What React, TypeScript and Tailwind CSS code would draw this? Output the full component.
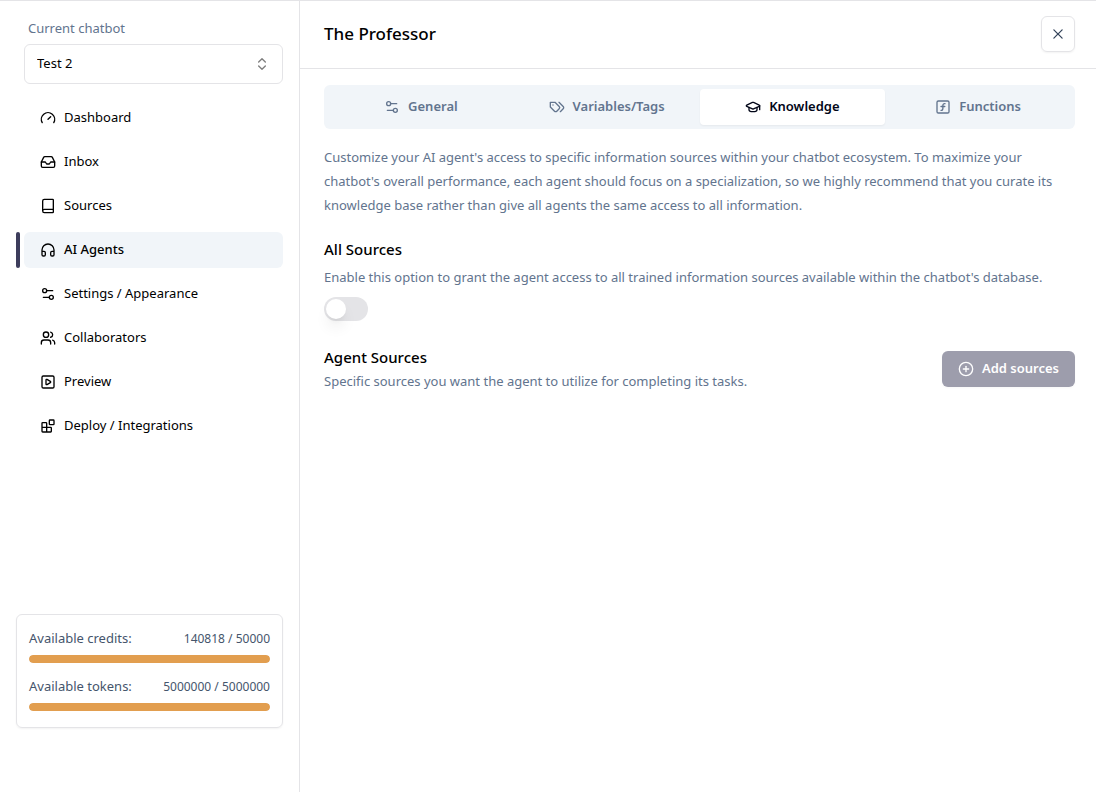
import React, { useState } from "react";
import { Gauge, Inbox, Book, Headphones, Settings2, Users, SquarePlay, GraduationCap, SquareFunction, CirclePlus, ChevronsUpDown } from "lucide-react";

type IconProps = { className?: string; strokeWidth?: number };

function BlocksIcon({ className }: IconProps) {
  return (
    <svg viewBox="0 0 24 24" fill="none" stroke="currentColor" strokeWidth={2} strokeLinecap="round" strokeLinejoin="round" className={className} aria-hidden="true">
      <rect width="7" height="7" x="14" y="3" rx="1" />
      <path d="M10 21V8a1 1 0 0 0-1-1H4a1 1 0 0 0-1 1v12a1 1 0 0 0 1 1h12a1 1 0 0 0 1-1v-5a1 1 0 0 0-1-1H3" />
    </svg>
  );
}

function TagsIcon({ className }: IconProps) {
  return (
    <svg viewBox="0 0 24 24" fill="none" stroke="currentColor" strokeWidth={2} strokeLinecap="round" strokeLinejoin="round" className={className} aria-hidden="true">
      <path d="M9 5H2v7l6.29 6.29c.94.94 2.48.94 3.42 0l3.58-3.58c.94-.94.94-2.48 0-3.42L9 5Z" />
      <path d="M6 9.01V9" />
      <path d="m15 5 6.3 6.3a2.4 2.4 0 0 1 0 3.4L17 19" />
    </svg>
  );
}

function CloseIcon({ className }: IconProps) {
  return (
    <svg viewBox="0 0 15 15" fill="currentColor" className={className} aria-hidden="true">
      <path
        fillRule="evenodd"
        clipRule="evenodd"
        d="M11.7816 4.03157C12.0062 3.80702 12.0062 3.44295 11.7816 3.2184C11.5571 2.99385 11.193 2.99385 10.9685 3.2184L7.50005 6.68682L4.03164 3.2184C3.80708 2.99385 3.44301 2.99385 3.21846 3.2184C2.99391 3.44295 2.99391 3.80702 3.21846 4.03157L6.68688 7.49999L3.21846 10.9684C2.99391 11.193 2.99391 11.557 3.21846 11.7816C3.44301 12.0061 3.80708 12.0061 4.03164 11.7816L7.50005 8.31316L10.9685 11.7816C11.193 12.0061 11.5571 12.0061 11.7816 11.7816C12.0062 11.557 12.0062 11.193 11.7816 10.9684L8.31322 7.49999L11.7816 4.03157Z"
      />
    </svg>
  );
}

const navItems: { label: string; icon: React.ComponentType<IconProps> }[] = [
  { label: "Dashboard", icon: Gauge },
  { label: "Inbox", icon: Inbox },
  { label: "Sources", icon: Book },
  { label: "AI Agents", icon: Headphones },
  { label: "Settings / Appearance", icon: Settings2 },
  { label: "Collaborators", icon: Users },
  { label: "Preview", icon: SquarePlay },
  { label: "Deploy / Integrations", icon: BlocksIcon },
];

const tabs: { label: string; icon: React.ComponentType<IconProps> }[] = [
  { label: "General", icon: Settings2 },
  { label: "Variables/Tags", icon: TagsIcon },
  { label: "Knowledge", icon: GraduationCap },
  { label: "Functions", icon: SquareFunction },
];

const usage = [
  { label: "Available credits:", used: 140818, total: 50000 },
  { label: "Available tokens:", used: 5000000, total: 5000000 },
];

function Sidebar() {
  return (
    <aside className="flex w-75 shrink-0 flex-col border-r border-zinc-200 px-4 pt-[15px] pb-16">
      <div className="pl-2">
        <label htmlFor="chatbot" className="block pl-1 text-[13px] leading-6 text-slate-500">
          Current chatbot
        </label>
        <div className="relative mt-1">
          <select id="chatbot" className="h-10 w-full appearance-none rounded-md border border-zinc-200 bg-white px-3 text-[13px] text-black">
            <option>Test 2</option>
          </select>
          <ChevronsUpDown className="pointer-events-none absolute top-3 right-[13px] size-4 opacity-50" />
        </div>
      </div>
      <nav className="mt-4 flex flex-col gap-2">
        {navItems.map(({ label, icon: Icon }) => {
          const active = label === "AI Agents";
          return (
            <a key={label} href="#" aria-current={active ? "page" : undefined} className="flex h-9 gap-1 text-[13px] text-black">
              <span className={active ? "w-1 rounded-xs bg-[#3d3d5c]" : "w-1"} />
              <span className={active ? "flex flex-1 items-center gap-2 rounded-md bg-slate-100 px-4 font-medium" : "flex flex-1 items-center gap-2 rounded-md px-4"}>
                <Icon className="size-4" />
                {label}
              </span>
            </a>
          );
        })}
      </nav>
      <section className="mt-auto flex flex-col gap-3 rounded-md border border-zinc-200 px-3 pt-3 pb-4 shadow-xs">
        {usage.map(({ label, used, total }) => (
          <div key={label}>
            <div className="flex h-6 items-center justify-between text-slate-600">
              <span className="text-[13px]">{label}</span>
              <span className="text-xs">
                {used} / {total}
              </span>
            </div>
            <div className="mt-1 h-2 overflow-hidden rounded-full bg-slate-100">
              <div className="h-full rounded-full bg-[#e29e4f]" style={{ width: `${Math.min(100, (used / total) * 100)}%` }} />
            </div>
          </div>
        ))}
      </section>
    </aside>
  );
}

export default function App() {
  const [allSources, setAllSources] = useState(false);
  return (
    <div className="flex min-h-screen border-t border-zinc-200 bg-white font-['Noto_Sans','Open_Sans',sans-serif] text-black">
      <Sidebar />
      <main className="min-w-0 flex-1">
        <header className="flex h-17 items-center justify-between border-b border-zinc-200 pr-[21px] pb-0.5 pl-6">
          <h1 className="text-[17px] font-medium">The Professor</h1>
          <button type="button" aria-label="Close" className="flex h-9 items-center rounded-md border border-zinc-200 px-2 text-slate-700 shadow-xs">
            <CloseIcon className="size-4" />
          </button>
        </header>
        <div className="pt-4 pr-[21px] pl-6">
          <div role="tablist" className="grid h-11 grid-cols-4 rounded-md bg-slate-100 p-1 text-[13px] font-semibold">
            {tabs.map(({ label, icon: Icon }) => {
              const active = label === "Knowledge";
              return (
                <button
                  key={label}
                  type="button"
                  role="tab"
                  aria-selected={active}
                  className={active ? "flex items-center justify-center gap-2 rounded-sm bg-white text-slate-950 shadow-xs" : "flex items-center justify-center gap-2 text-slate-500"}
                >
                  <Icon className="size-4" />
                  {label}
                </button>
              );
            })}
          </div>
          <p className="mt-4 text-[13px] leading-6 text-slate-500">
            Customize your AI agent's access to specific information sources within your chatbot ecosystem. To maximize your chatbot's overall performance, each agent should focus on a specialization, so we highly recommend that you curate its knowledge base rather than give all agents the same access to all information.
          </p>
          <section className="mt-5">
            <h2 className="text-[15px] leading-6 font-medium">All Sources</h2>
            <p id="all-sources-help" className="mt-1 text-[13px] leading-6 text-slate-500">
              Enable this option to grant the agent access to all trained information sources available within the chatbot's database.
            </p>
            <input
              type="checkbox"
              role="switch"
              aria-label="All Sources"
              aria-describedby="all-sources-help"
              checked={allSources}
              onChange={(e) => setAllSources(e.target.checked)}
              className="mt-2 flex h-6 w-11 appearance-none items-center rounded-full bg-zinc-200 p-0.5 before:size-5 before:rounded-full before:bg-white before:shadow-lg checked:justify-end checked:bg-[#3d3d5c]"
            />
          </section>
          <section className="mt-6 flex items-center justify-between gap-4">
            <div>
              <h2 className="text-[15px] leading-6 font-medium">Agent Sources</h2>
              <p className="text-[13px] leading-6 text-slate-500">Specific sources you want the agent to utilize for completing its tasks.</p>
            </div>
            <button type="button" disabled className="flex h-9 items-center gap-2 rounded-md bg-[#3d3d5c] px-4 text-[13px] font-semibold text-white opacity-50 shadow-xs">
              <CirclePlus className="size-4" />
              Add sources
            </button>
          </section>
        </div>
      </main>
    </div>
  );
}
